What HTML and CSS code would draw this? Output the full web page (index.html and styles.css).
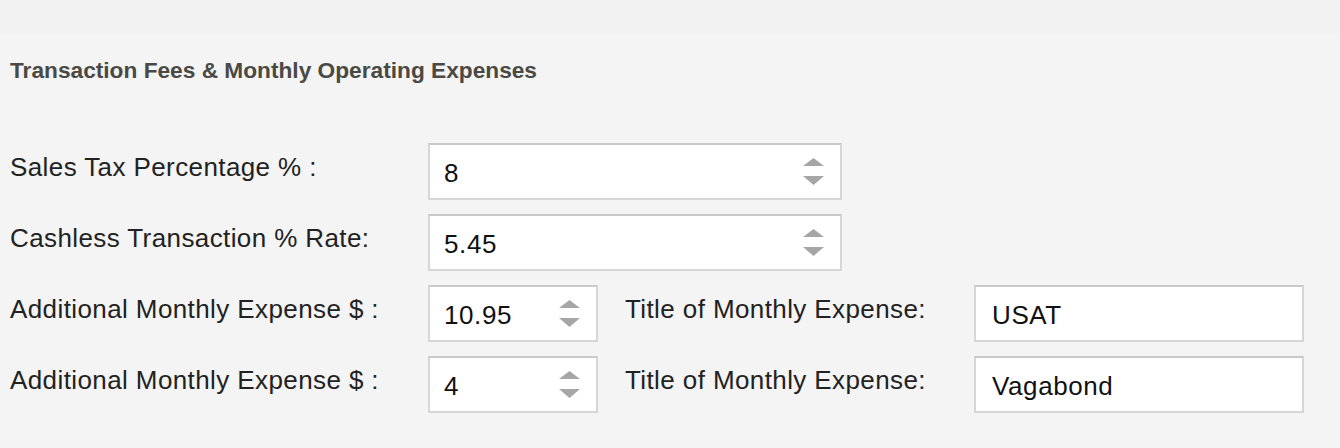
FILE: index.html
```html
<!DOCTYPE html>
<html lang="en">
<head>
<meta charset="UTF-8">
<title>Transaction Fees &amp; Monthly Operating Expenses</title>
<link rel="stylesheet" href="styles.css">
</head>
<body>

<div class="topbar"></div>

<div class="section">
  <h2>Transaction Fees &amp; Monthly Operating Expenses</h2>

  <div class="row">
    <span class="label">Sales Tax Percentage % :</span>
    <div class="num wide">
      <input type="text" value="8">
      <svg class="spin" width="21" height="27" viewBox="0 0 21 27"><path d="M0 8 L10.5 0 L21 8 Z M0 18 L21 18 L10.5 27 Z"/></svg>
    </div>
  </div>

  <div class="row">
    <span class="label">Cashless Transaction % Rate:</span>
    <div class="num wide">
      <input type="text" value="5.45">
      <svg class="spin" width="21" height="27" viewBox="0 0 21 27"><path d="M0 8 L10.5 0 L21 8 Z M0 18 L21 18 L10.5 27 Z"/></svg>
    </div>
  </div>

  <div class="row">
    <span class="label">Additional Monthly Expense $ :</span>
    <div class="num small">
      <input type="text" value="10.95">
      <svg class="spin" width="21" height="27" viewBox="0 0 21 27"><path d="M0 8 L10.5 0 L21 8 Z M0 18 L21 18 L10.5 27 Z"/></svg>
    </div>
    <span class="label title">Title of Monthly Expense:</span>
    <input class="text" type="text" value="USAT">
  </div>

  <div class="row">
    <span class="label">Additional Monthly Expense $ :</span>
    <div class="num small">
      <input type="text" value="4">
      <svg class="spin" width="21" height="27" viewBox="0 0 21 27"><path d="M0 8 L10.5 0 L21 8 Z M0 18 L21 18 L10.5 27 Z"/></svg>
    </div>
    <span class="label title">Title of Monthly Expense:</span>
    <input class="text" type="text" value="Vagabond">
  </div>
</div>

</body>
</html>
```

FILE: styles.css
```css
body {
  font-family: "Liberation Sans", Arial, sans-serif;
  margin: 0;
  padding: 0;
  background-color: #f4f4f4;
  color: #222;
}
.topbar {
  height: 33px;
  background-color: #f2f2f2;
}
.section {
  padding: 24px 0 0 10px;
}
h2 {
  margin: 0 0 60px 0;
  font-size: 22.7px;
  line-height: 26px;
  font-weight: bold;
  color: #4a4943;
}
.row {
  display: flex;
  align-items: center;
  height: 57px;
  margin-bottom: 14px;
}
.label {
  width: 418px;
  font-size: 26px;
  line-height: 30px;
  letter-spacing: 0.4px;
  padding-bottom: 10px;
  flex-shrink: 0;
}
.label.title {
  width: 349px;
  margin-left: 27px;
}
.num {
  display: flex;
  align-items: center;
  height: 57px;
  box-sizing: border-box;
  border: 2px solid #d6d6d6;
  border-top-color: #c9c9c9;
  background-color: #fff;
  padding-right: 16px;
}
.num.wide {
  width: 414px;
}
.num.small {
  width: 170px;
}
.num input {
  flex: 1;
  min-width: 0;
  border: none;
  outline: none;
  padding: 4px 0 0 14px;
  font-family: "Liberation Sans", Arial, sans-serif;
  font-size: 26px;
  letter-spacing: 0.6px;
  color: #111;
  background: transparent;
}
.spin {
  fill: #a6a6a6;
  flex-shrink: 0;
}
input.text {
  width: 330px;
  height: 57px;
  box-sizing: border-box;
  border: 2px solid #d6d6d6;
  border-top-color: #c9c9c9;
  background-color: #fff;
  padding: 4px 0 0 16px;
  font-family: "Liberation Sans", Arial, sans-serif;
  font-size: 26px;
  letter-spacing: 0.6px;
  color: #111;
  outline: none;
}
```
